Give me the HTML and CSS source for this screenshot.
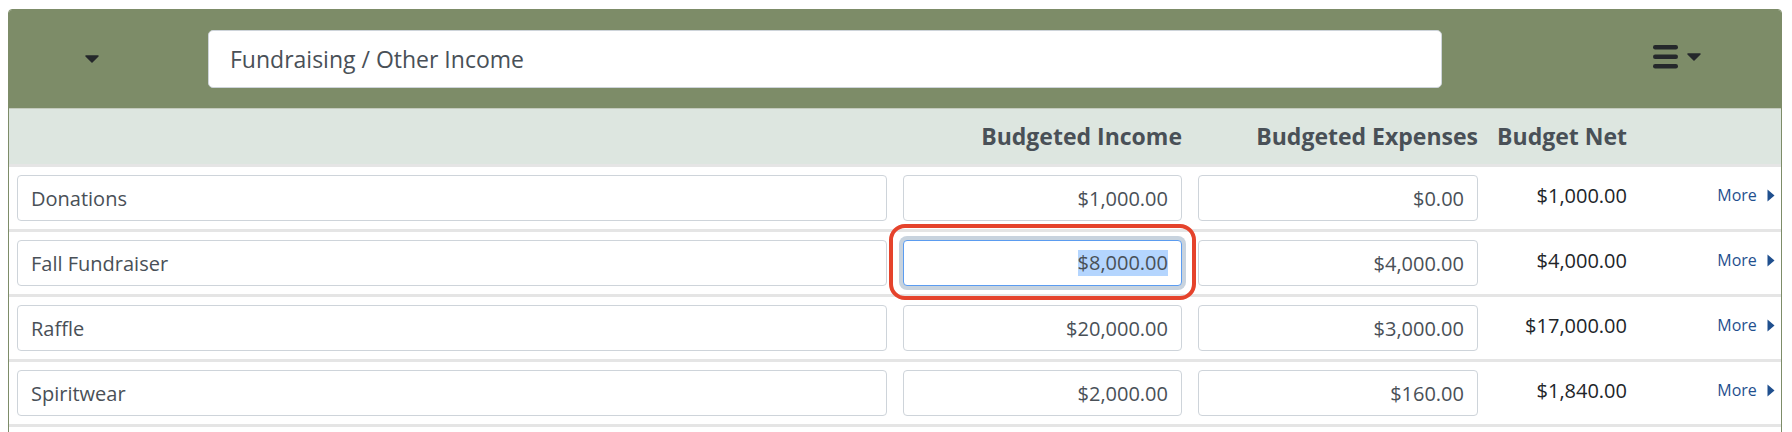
FILE: index.html
```html
<!DOCTYPE html>
<html lang="en">
  <head>
    <meta charset="UTF-8">
    <meta name="viewport" content="width=device-width, initial-scale=1.0">
    <title>Budget</title>
    <link rel="stylesheet" href="styles.css">
  </head>
<body>
  <div class="panel">
    <div class="toolbar">
      <svg class="caret" width="14" height="8" viewBox="0 0 14 8"><path d="M1 1h12L7 7z" fill="#25282b" stroke="#25282b" stroke-width="1.5" stroke-linejoin="round"/></svg>
      <input class="title-input" type="text" value="Fundraising / Other Income">
      <div class="menu">
        <svg width="25" height="24" viewBox="0 0 25 24"><rect x="0" y="0" width="25" height="4.5" rx="2.2" fill="#25282b"/><rect x="0" y="9.5" width="25" height="4.5" rx="2.2" fill="#25282b"/><rect x="0" y="19" width="25" height="4.5" rx="2.2" fill="#25282b"/></svg>
        <svg width="14" height="8" viewBox="0 0 14 8"><path d="M1 1h12L7 7z" fill="#25282b" stroke="#25282b" stroke-width="1.5" stroke-linejoin="round"/></svg>
      </div>
    </div>

    <div class="fila encabezado">
      <span></span>
      <span class="titulo">Budgeted Income</span>
      <span class="titulo">Budgeted Expenses</span>
      <span class="titulo">Budget Net</span>
      <span></span>
    </div>

    <div class="fila">
      <input class="campo" type="text" value="Donations">
      <input class="campo num" type="text" value="$1,000.00">
      <input class="campo num" type="text" value="$0.00">
      <span class="neto">$1,000.00</span>
      <a href="#" class="mas">More <svg width="8" height="13" viewBox="0 0 8 13"><path d="M0.5 0.5L7.5 6.5L0.5 12.5z" fill="#1f4f8e"/></svg></a>
    </div>

    <div class="fila">
      <input class="campo" type="text" value="Fall Fundraiser">
      <div class="marcado">
        <div class="campo num foco"><span class="seleccion">$8,000.00</span></div>
      </div>
      <input class="campo num" type="text" value="$4,000.00">
      <span class="neto">$4,000.00</span>
      <a href="#" class="mas">More <svg width="8" height="13" viewBox="0 0 8 13"><path d="M0.5 0.5L7.5 6.5L0.5 12.5z" fill="#1f4f8e"/></svg></a>
    </div>

    <div class="fila">
      <input class="campo" type="text" value="Raffle">
      <input class="campo num" type="text" value="$20,000.00">
      <input class="campo num" type="text" value="$3,000.00">
      <span class="neto">$17,000.00</span>
      <a href="#" class="mas">More <svg width="8" height="13" viewBox="0 0 8 13"><path d="M0.5 0.5L7.5 6.5L0.5 12.5z" fill="#1f4f8e"/></svg></a>
    </div>

    <div class="fila">
      <input class="campo" type="text" value="Spiritwear">
      <input class="campo num" type="text" value="$2,000.00">
      <input class="campo num" type="text" value="$160.00">
      <span class="neto">$1,840.00</span>
      <a href="#" class="mas">More <svg width="8" height="13" viewBox="0 0 8 13"><path d="M0.5 0.5L7.5 6.5L0.5 12.5z" fill="#1f4f8e"/></svg></a>
    </div>
  </div>
</body>
</html>
```

FILE: styles.css
```css
  :root {
    --color-barra: #7d8c68;
    --color-encabezado: #dde6e0;
    --color-linea: #e5e5e5;
    --color-borde: #ced4da;
    --color-texto: #495057;
    --color-enlace: #1f4f8e;
    --color-marca: #e5432c;
  }

  * {
    box-sizing: border-box;
  }

  body {
    font-family: 'Open Sans', 'Noto Sans', sans-serif;
    margin: 9px 10px 0 8px;
    background-color: white;
    color: #212529;
    line-height: 1.5;
  }

  .panel {
    border: 1px solid var(--color-barra);
    border-radius: 4px 4px 0 0;
    background: white;
    padding-bottom: 60px;
  }

  .toolbar {
    display: flex;
    align-items: center;
    height: 99px;
    padding: 0 80px 0 76px;
    background-color: var(--color-barra);
    border-bottom: 1px solid #c4cabd;
    border-radius: 3px 3px 0 0;
  }

  .caret {
    flex: none;
    margin-bottom: 1px;
  }

  .title-input {
    flex: 1;
    min-width: 0;
    height: 58px;
    margin: 0 211px 0 109px;
    padding: 0 21px;
    font-family: inherit;
    font-size: 23px;
    color: var(--color-texto);
    border: 1px solid var(--color-borde);
    border-radius: 5px;
    background: white;
  }

  .menu {
    display: flex;
    align-items: center;
    gap: 9px;
    margin-bottom: 4px;
  }

  .fila {
    display: grid;
    grid-template-columns: 1fr 279px 280px 133px 132px;
    column-gap: 16px;
    align-items: center;
    padding: 8px 6px 8px 8px;
    border-bottom: 3px solid var(--color-linea);
  }

  .encabezado {
    height: 58px;
    padding-top: 0;
    padding-bottom: 0;
    background-color: var(--color-encabezado);
  }

  .titulo {
    text-align: right;
    font-size: 23px;
    font-weight: bold;
    color: var(--color-texto);
    white-space: nowrap;
  }

  .campo {
    width: 100%;
    height: 46px;
    padding: 0 13px;
    font-family: inherit;
    font-size: 20px;
    color: var(--color-texto);
    border: 1px solid var(--color-borde);
    border-radius: 4px;
    background: white;
  }

  .campo.num {
    text-align: right;
  }

  .foco {
    display: flex;
    align-items: center;
    justify-content: flex-end;
    border-color: #5b9cf0;
    box-shadow: 0 0 0 4px #c8d3de;
  }

  .seleccion {
    background-color: #b4d5fe;
    line-height: 26px;
  }

  .marcado {
    position: relative;
  }

  .marcado::after {
    content: "";
    position: absolute;
    inset: -16px -14px -14px -14px;
    border: 4px solid var(--color-marca);
    border-radius: 16px;
    pointer-events: none;
  }

  .neto {
    text-align: right;
    font-size: 20px;
    color: #212529;
    padding-bottom: 4px;
  }

  .mas {
    text-align: right;
    font-size: 16px;
    color: var(--color-enlace);
    text-decoration: none;
    padding-bottom: 6px;
  }

  .mas svg {
    margin-left: 6px;
    vertical-align: -1px;
  }
```
